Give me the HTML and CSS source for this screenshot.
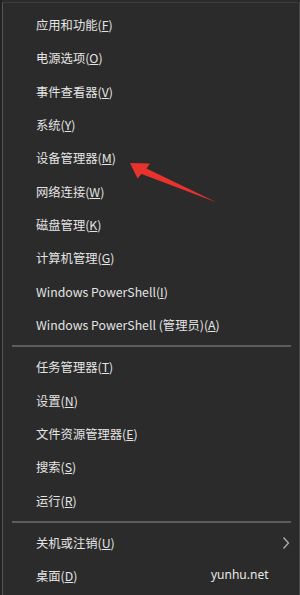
FILE: index.html
```html
<!DOCTYPE html>
<html lang="zh-CN">
<head>
<meta charset="utf-8">
<title>Win+X 菜单</title>
<link rel="stylesheet" href="styles.css">
</head>
<body>
<div class="frame">
  <div class="menu">
    <div class="item">应用和功能(<u>F</u>)</div>
    <div class="item">电源选项(<u>O</u>)</div>
    <div class="item">事件查看器(<u>V</u>)</div>
    <div class="item">系统(<u>Y</u>)</div>
    <div class="item">设备管理器(<u>M</u>)</div>
    <div class="item">网络连接(<u>W</u>)</div>
    <div class="item">磁盘管理(<u>K</u>)</div>
    <div class="item">计算机管理(<u>G</u>)</div>
    <div class="item">Windows PowerShell(<u>I</u>)</div>
    <div class="item">Windows PowerShell (管理员)(<u>A</u>)</div>
    <div class="sep"></div>
    <div class="item">任务管理器(<u>T</u>)</div>
    <div class="item">设置(<u>N</u>)</div>
    <div class="item">文件资源管理器(<u>E</u>)</div>
    <div class="item">搜索(<u>S</u>)</div>
    <div class="item">运行(<u>R</u>)</div>
    <div class="sep"></div>
    <div class="item has-sub">关机或注销(<u>U</u>)
      <svg class="chev" width="8" height="14" viewBox="0 0 8 14"><path d="M1.5 1.5 L6.5 7 L1.5 12.5" fill="none" stroke="#b0b0b0" stroke-width="1.3"/></svg>
    </div>
    <div class="item">桌面(<u>D</u>)</div>
  </div>
  <svg class="arrow" width="300" height="595" viewBox="0 0 300 595">
    <polygon points="128,163 148,163.5 144.5,168.5 215,202.5 139.5,174 135.5,178.5" fill="#e8322c"/>
  </svg>
  <div class="watermark">yunhu.net</div>
</div>
</body>
</html>
```

FILE: styles.css
```css
html, body {
  margin: 0;
  padding: 0;
  background: #232323;
}
.frame {
  position: relative;
  width: 300px;
  height: 595px;
  overflow: hidden;
  background: #2b2b2b;
  box-sizing: border-box;
  border-left: 2px solid #222222;
}
.menu {
  box-sizing: border-box;
  height: 595px;
  margin-top: 2px;
  border-left: 1px solid #555555;
  border-top: 1px solid #3d3d3d;
  border-right: 1px solid #4a4a4a;
  padding-top: 5.3px;
  display: flex;
  flex-direction: column;
  font-family: "Noto Sans CJK SC", "Noto Sans", sans-serif;
  font-size: 12.3px;
  color: #e4e4e4;
}
.item {
  height: 33.33px;
  flex: none;
  display: flex;
  align-items: center;
  padding-left: 33px;
  position: relative;
  white-space: nowrap;
}
.item u {
  text-decoration: underline;
  text-underline-offset: 1px;
}
.sep {
  flex: none;
  height: 9px;
  margin: 0 8px 0 9px;
  display: flex;
  align-items: center;
}
.sep::before {
  content: "";
  display: block;
  width: 100%;
  height: 2px;
  background: #5c5c5c;
}
.chev {
  position: absolute;
  right: 9px;
  top: 10px;
}
.arrow {
  position: absolute;
  left: 0;
  top: 0;
  pointer-events: none;
}
.watermark {
  position: absolute;
  left: 209px;
  top: 566px;
  font-family: "Noto Sans", sans-serif;
  font-size: 12px;
  color: #e8e8e8;
}
```
